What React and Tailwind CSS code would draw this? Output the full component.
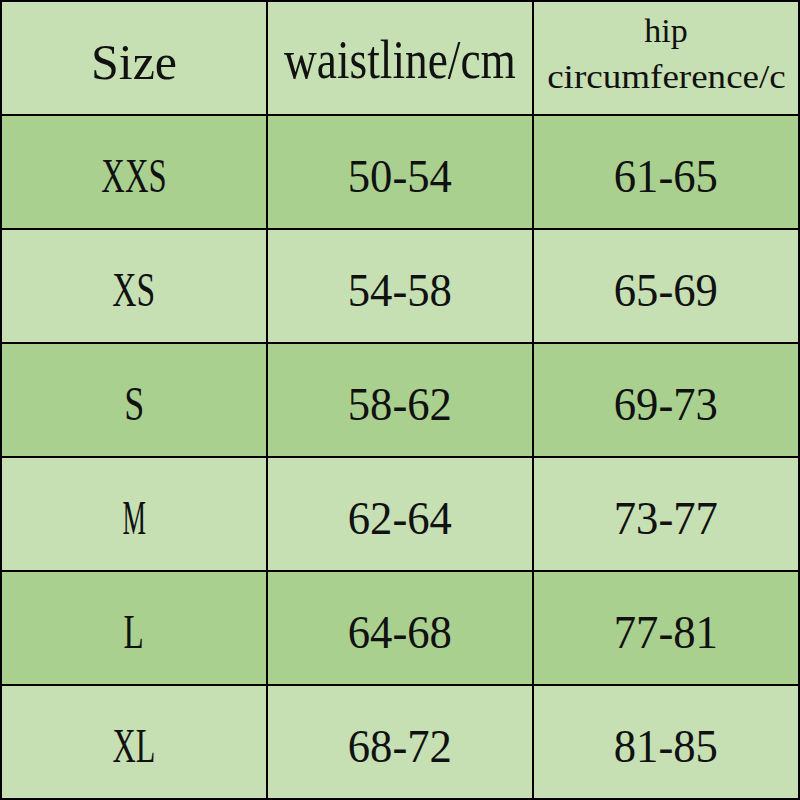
import React from "react";

const rows = [
  { size: "XXS", sizeFit: "scale-x-[0.68]", waist: "50-54", hip: "61-65", shade: "dark" },
  { size: "XS", sizeFit: "scale-x-[0.7]", waist: "54-58", hip: "65-69", shade: "light" },
  { size: "S", sizeFit: "scale-x-[0.75]", waist: "58-62", hip: "69-73", shade: "dark" },
  { size: "M", sizeFit: "scale-x-[0.55]", waist: "62-64", hip: "73-77", shade: "light" },
  { size: "L", sizeFit: "scale-x-[0.69]", waist: "64-68", hip: "77-81", shade: "dark" },
  { size: "XL", sizeFit: "scale-x-[0.67]", waist: "68-72", hip: "81-85", shade: "light" },
];

function Cell({ shade, children }) {
  return (
    <div
      className={
        "flex flex-col items-center justify-center text-[#111] " +
        (shade === "dark" ? "bg-[#a9d08e]" : "bg-[#c6e0b4]")
      }
    >
      {children}
    </div>
  );
}

export default function App() {
  return (
    <div className="w-[800px] h-[800px] bg-white font-['Liberation_Serif',serif]">
      <div className="grid grid-cols-3 grid-rows-7 gap-[2px] p-[2px] bg-black w-[800px] h-[800px]">
        {/* header row */}
        <Cell shade="light">
          <span className="inline-block text-[50px] leading-none pt-2">Size</span>
        </Cell>
        <Cell shade="light">
          <span className="inline-block text-[54px] leading-none scale-x-[0.84] pt-1">waistline/cm</span>
        </Cell>
        <Cell shade="light">
          <span className="inline-block text-[34px] leading-[46px] -mt-2">hip</span>
          <span className="inline-block text-[34px] leading-[46px] scale-x-[1.09]">circumference/c</span>
        </Cell>

        {rows.map((r) => (
          <React.Fragment key={r.size}>
            <Cell shade={r.shade}>
              <span className={"inline-block text-[48px] leading-none pt-2 " + r.sizeFit}>{r.size}</span>
            </Cell>
            <Cell shade={r.shade}>
              <span className="inline-block text-[47px] leading-none pt-2 scale-x-[0.95]">{r.waist}</span>
            </Cell>
            <Cell shade={r.shade}>
              <span className="inline-block text-[47px] leading-none pt-2 scale-x-[0.95]">{r.hip}</span>
            </Cell>
          </React.Fragment>
        ))}
      </div>
    </div>
  );
}
